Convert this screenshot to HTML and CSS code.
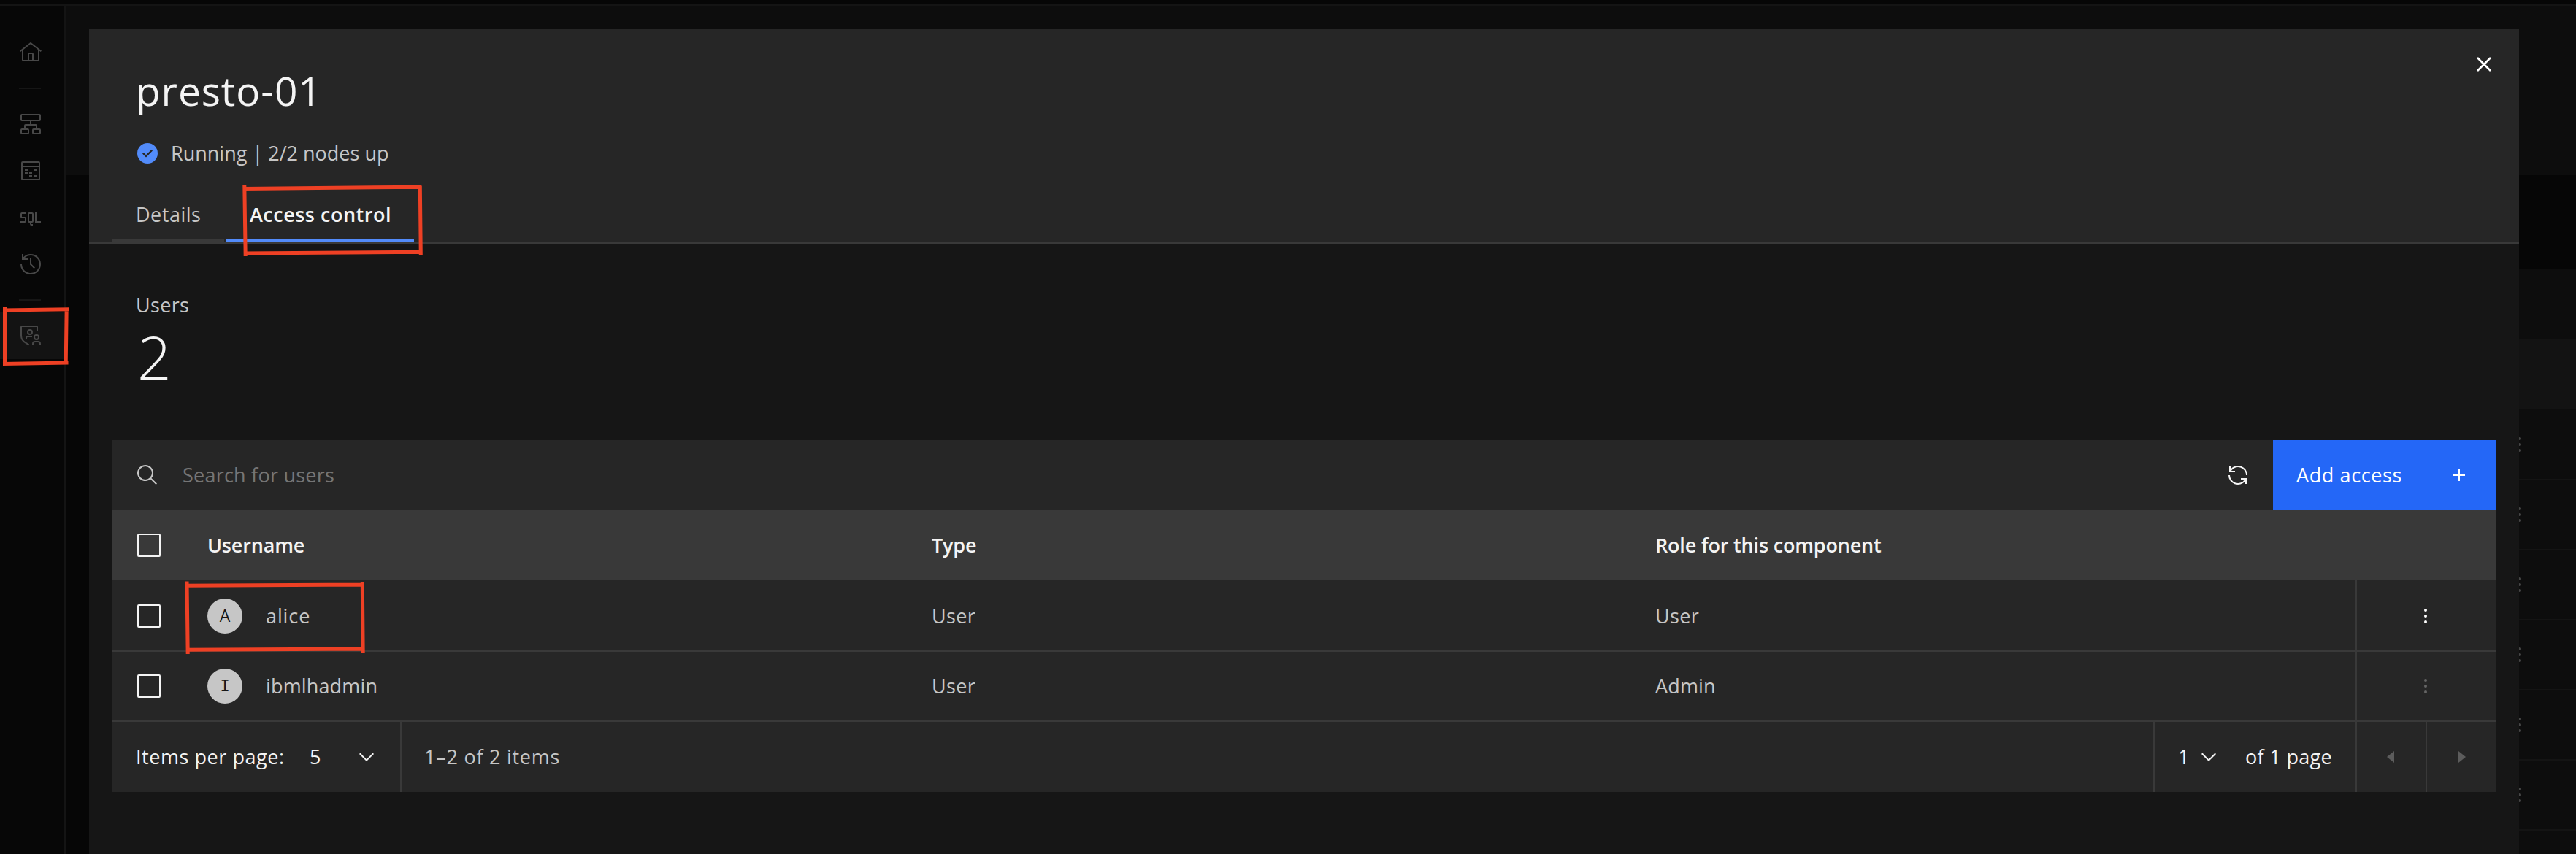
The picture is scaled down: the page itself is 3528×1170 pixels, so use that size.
FILE: index.html
```html
<!DOCTYPE html>
<html lang="en">
<head>
<meta charset="utf-8">
<title>presto-01</title>
<link rel="stylesheet" href="styles.css">
</head>
<body>
<div class="app">
  <header class="topbar"></header>
  <nav class="sidebar">
    <a class="nav-item"><svg class="icon" viewBox="0 0 32 32"><path d="M16.6123 2.2138a1.01 1.01 0 0 0-1.2427 0L1 13.4194l1.2427 1.5717L4 13.621V26a2.0041 2.0041 0 0 0 2 2H26a2.0037 2.0037 0 0 0 2-2V13.63L29.7573 15 31 13.4282ZM18 26H14V18h4Zm2 0V18a2.0023 2.0023 0 0 0-2-2H14a2.002 2.002 0 0 0-2 2v8H6V12.0615l10-7.79 10 7.8005V26Z"/></svg></a>
    <hr class="nav-rule">
    <a class="nav-item"><svg class="icon line" viewBox="0 0 32 32"><rect x="3" y="3" width="26" height="8" rx="1"/><path d="M16 11v6M8 23v-5a1 1 0 0 1 1-1h14a1 1 0 0 1 1 1v5"/><rect x="3" y="23" width="10" height="6" rx="1"/><rect x="19" y="23" width="10" height="6" rx="1"/></svg></a>
    <a class="nav-item"><svg class="icon" viewBox="0 0 32 32"><path d="M8 18h4v2H8zM14 18h4v2h-4zM8 14h4v2H8zM14 22h4v2h-4zM20 14h4v2h-4zM20 22h4v2h-4z"/><path d="M27 3H5a2 2 0 0 0-2 2v22a2 2 0 0 0 2 2h22a2 2 0 0 0 2-2V5a2 2 0 0 0-2-2Zm0 2v4H5V5ZM5 27V11h22v16Z"/></svg></a>
    <a class="nav-item"><svg class="icon" viewBox="0 0 32 32"><path d="M24 21V9h-2v14h8v-2zM18 9h-4a2 2 0 0 0-2 2v10a2 2 0 0 0 2 2h1v2a2 2 0 0 0 2 2h2v-2h-2v-2h1a2 2 0 0 0 2-2V11a2 2 0 0 0-2-2Zm-4 12V11h4v10ZM8 23H2v-2h6v-4H4a2 2 0 0 1-2-2v-4a2 2 0 0 1 2-2h6v2H4v4h4a2 2 0 0 1 2 2v4a2 2 0 0 1-2 2Z"/></svg></a>
    <a class="nav-item"><svg class="icon" viewBox="0 0 32 32"><path d="M20.59 22 15 16.41V7h2v8.58l5 5.01L20.59 22z"/><path d="M16 2A13.94 13.94 0 0 0 6 6.23V2H4v8h8V8H7.08A12 12 0 1 1 4 16H2A14 14 0 1 0 16 2Z"/></svg></a>
    <hr class="nav-rule">
    <a class="nav-item active"><svg class="icon line" viewBox="0 0 32 32"><path d="M25 10V4a1 1 0 0 0-1-1H4a1 1 0 0 0-1 1v12c0 5 2.600 7.900 7 10.200l3.600 2.200"/><circle cx="15" cy="11" r="3"/><path d="M10 21v-2a2 2 0 0 1 2-2h6"/><circle cx="24" cy="18" r="3"/><path d="M19 29v-2a3 3 0 0 1 3-3h4a3 3 0 0 1 3 3v2"/></svg></a>
  </nav>
  <main class="page">
    <div class="page-header"></div>
    <div class="page-gap"></div>
    <div class="page-table">
      <div class="page-toolbar"></div>
      <div class="page-columns"></div>
      <div class="page-row first"><svg class="icon" viewBox="0 0 32 32"><circle cx="16" cy="8" r="2"/><circle cx="16" cy="16" r="2"/><circle cx="16" cy="24" r="2"/></svg></div>
      <div class="page-row"><svg class="icon" viewBox="0 0 32 32"><circle cx="16" cy="8" r="2"/><circle cx="16" cy="16" r="2"/><circle cx="16" cy="24" r="2"/></svg></div>
      <div class="page-row"><svg class="icon" viewBox="0 0 32 32"><circle cx="16" cy="8" r="2"/><circle cx="16" cy="16" r="2"/><circle cx="16" cy="24" r="2"/></svg></div>
      <div class="page-row"><svg class="icon" viewBox="0 0 32 32"><circle cx="16" cy="8" r="2"/><circle cx="16" cy="16" r="2"/><circle cx="16" cy="24" r="2"/></svg></div>
      <div class="page-row"><svg class="icon" viewBox="0 0 32 32"><circle cx="16" cy="8" r="2"/><circle cx="16" cy="16" r="2"/><circle cx="16" cy="24" r="2"/></svg></div>
      <div class="page-row"><svg class="icon" viewBox="0 0 32 32"><circle cx="16" cy="8" r="2"/><circle cx="16" cy="16" r="2"/><circle cx="16" cy="24" r="2"/></svg></div>
      <div class="page-row"></div>
    </div>
  </main>
</div>

<section class="modal">
  <header class="modal-header">
    <h1 class="title">presto-01</h1>
    <div class="status">
      <svg class="icon status-icon" viewBox="0 0 32 32"><circle class="disc" cx="16" cy="16" r="14"/><path class="tick" d="M14 21.500 9 16.540 10.590 14.970 14 18.350 21.410 10.950 23 12.580Z"/></svg>
      <span>Running | 2/2 nodes up</span>
    </div>
    <div class="tabs">
      <a class="tab">Details</a>
      <a class="tab selected">Access control</a>
    </div>
    <button class="close"><svg viewBox="0 0 40 40"><path d="M11 11 29 29M29 11 11 29"/></svg></button>
  </header>
  <div class="modal-body">
    <div class="stat-label">Users</div>
    <div class="stat-value">2</div>
    <div class="table">
      <div class="toolbar">
        <svg class="icon search-icon" viewBox="0 0 32 32"><path d="m29 27.5859-7.5521-7.5521a11.0177 11.0177 0 1 0-1.4141 1.4141L27.5859 29ZM4 13a9 9 0 1 1 9 9A9.01 9.01 0 0 1 4 13Z"/></svg>
        <span class="search-text">Search for users</span>
        <button class="refresh"><svg class="icon" viewBox="0 0 32 32"><path d="M12 10H6.780A11 11 0 0 1 27 16h2A13 13 0 0 0 6 7.680V4H4v8h8Z"/><path d="M20 22h5.220A11 11 0 0 1 5 16H3a13 13 0 0 0 23 8.320V28h2V20H20Z"/></svg></button>
        <button class="add"><span>Add access</span><svg class="icon" viewBox="0 0 32 32"><path d="M17 15V8h-2v7H8v2h7v7h2v-7h7v-2z"/></svg></button>
      </div>
      <div class="row head">
        <span class="checkbox"></span>
        <span class="name-head">Username</span>
        <span class="type-head">Type</span>
        <span class="role-head">Role for this component</span>
      </div>
      <div class="row first">
        <span class="checkbox"></span>
        <span class="user"><span class="avatar">A</span><span class="alice">alice</span></span>
        <span>User</span>
        <span>User</span>
        <span class="actions"><svg class="icon" viewBox="0 0 32 32"><circle cx="16" cy="8" r="2"/><circle cx="16" cy="16" r="2"/><circle cx="16" cy="24" r="2"/></svg></span>
      </div>
      <div class="row">
        <span class="checkbox"></span>
        <span class="user"><span class="avatar serif">I</span><span class="ibmlhadmin">ibmlhadmin</span></span>
        <span>User</span>
        <span class="admin">Admin</span>
        <span class="actions disabled"><svg class="icon" viewBox="0 0 32 32"><circle cx="16" cy="8" r="2"/><circle cx="16" cy="16" r="2"/><circle cx="16" cy="24" r="2"/></svg></span>
      </div>
      <div class="pagination">
        <div class="per-page">
          <span class="per-page-label">Items per page:</span>
          <span class="per-page-value">5</span>
          <svg class="icon" viewBox="0 0 32 32"><path d="M16 22 6 12l1.400-1.400 8.600 8.600 8.600-8.600L26 12z"/></svg>
        </div>
        <div class="range">1–2 of 2 items</div>
        <div class="page-pick">
          <span class="page-value">1</span>
          <svg class="icon" viewBox="0 0 32 32"><path d="M16 22 6 12l1.400-1.400 8.600 8.600 8.600-8.600L26 12z"/></svg>
          <span class="page-total">of 1 page</span>
        </div>
        <button class="step prev"><svg class="icon" viewBox="0 0 32 32"><path d="M20 24 10 16 20 8z"/></svg></button>
        <button class="step next"><svg class="icon" viewBox="0 0 32 32"><path d="M12 8 22 16 12 24z"/></svg></button>
      </div>
    </div>
  </div>
</section>

<svg class="marks" viewBox="0 0 3528 1170">
  <path d="M334.800 253 336.200 351M334 258.500 577.500 256.200M575.300 255 576.300 350M334 347 578 345.200"/>
  <path d="M6.500 421V501M4 425 95 423.700M91.200 422 90.200 499M4 498.500 93.500 497"/>
  <path d="M256 796.500 257.200 896M254 802.300 498.500 801M496.300 798 497.200 894.500M255 890.200 499 889"/>
</svg>
</body>
</html>
```
FILE: styles.css
```css
* {
  box-sizing: border-box;
}

body {
  margin: 0;
  width: 3528px;
  height: 1170px;
  overflow: hidden;
  position: relative;
  background: #060606;
  color: #c6c6c6;
  font: 400 27px/36px "Open Sans", sans-serif;
}

button {
  border: 0;
  padding: 0;
  background: none;
  color: inherit;
  font: inherit;
}

.icon {
  display: block;
  flex: none;
  width: 32px;
  height: 32px;
  fill: currentColor;
}

.icon.line {
  fill: none;
  stroke: currentColor;
  stroke-width: 2;
}

/* Dimmed page behind the dialog */
.app {
  display: grid;
  grid-template: 8px 1162px / 90px 1fr;
  color: #484848;
}

.topbar {
  grid-column: 1 / 3;
  background: #060606;
  border-bottom: 2px solid #141414;
}

.sidebar {
  display: flex;
  flex-direction: column;
  padding-top: 32px;
  background: #070707;
  border-right: 2px solid #141414;
}

.nav-item {
  display: flex;
  align-items: center;
  height: 64px;
  padding-left: 26px;
}

.nav-item.active {
  background: #131313;
}

.nav-rule {
  width: 30px;
  height: 2px;
  margin: 16px 0 16px 26px;
  border: 0;
  background: #161616;
}

.page {
  overflow: hidden;
}

.page-header {
  height: 232px;
  background: #0d0d0d;
}

.page-gap {
  height: 128px;
}

.page-table {
  margin-left: 32px;
  background: #0d0d0d;
}

.page-toolbar {
  height: 96px;
}

.page-columns {
  height: 96px;
  background: #131313;
}

.page-row {
  display: flex;
  align-items: center;
  justify-content: flex-end;
  height: 96px;
  padding-right: 62px;
  border-bottom: 2px solid #141414;
}

.page-row.first {
  height: 98px;
  padding-top: 2px;
}

/* Dialog */
.modal {
  position: absolute;
  left: 122px;
  top: 40px;
  width: 3328px;
  height: 1130px;
  background: #161616;
}

.modal-header {
  position: relative;
  height: 294px;
  padding: 44px 32px 0;
  background: #262626;
  border-bottom: 2px solid #393939;
}

.title {
  margin: 0 0 28px 32px;
  color: #f4f4f4;
  font-size: 55px;
  font-weight: 400;
  line-height: 80px;
  letter-spacing: 0.9px;
}

.status {
  display: flex;
  align-items: center;
  gap: 16px;
  height: 36px;
  margin-left: 32px;
}

.disc {
  fill: #528bfa;
}

.tick {
  fill: #262626;
}

.tabs {
  display: flex;
  gap: 2px;
  margin-top: 31px;
}

.tab {
  width: 153px;
  height: 73px;
  padding-left: 32px;
  border-bottom: 4px solid #393939;
  line-height: 69px;
  letter-spacing: 0.5px;
}

.tab.selected {
  width: 258px;
  padding-left: 33px;
  border-color: #528bfa;
  color: #f4f4f4;
  font-weight: 600;
  white-space: nowrap;
}

.close {
  position: absolute;
  right: 28px;
  top: 28px;
  width: 40px;
  height: 40px;
}

.close svg {
  display: block;
  fill: none;
  stroke: #ffffff;
  stroke-width: 2.6;
}

.modal-body {
  padding: 66px 32px 0;
}

.stat-label {
  padding-left: 32px;
  letter-spacing: 0.31px;
}

.stat-value {
  margin: 4px 0 67px;
  padding-left: 34px;
  color: #f4f4f4;
  font-size: 82px;
  font-weight: 300;
  line-height: 96px;
}

.table {
  background: #262626;
}

.toolbar {
  display: flex;
  align-items: center;
  height: 96px;
  padding-left: 32px;
}

.search-text {
  flex: 1;
  padding-left: 32px;
  color: #757575;
  letter-spacing: 0.23px;
}

.search-icon {
  color: #c6c6c6;
}

.refresh {
  display: grid;
  place-items: center;
  width: 96px;
  height: 96px;
  color: #f4f4f4;
}

.add {
  display: flex;
  align-items: center;
  justify-content: space-between;
  width: 305px;
  height: 96px;
  padding: 0 34px 0 32px;
  background: #2467f7;
  color: #ffffff;
  letter-spacing: 0.62px;
}

.row {
  display: grid;
  grid-template-columns: 96px 992px 991px 959px 192px;
  align-items: center;
  height: 96px;
  padding-left: 34px;
  border-bottom: 2px solid #393939;
  letter-spacing: 0.35px;
}

.row.first {
  height: 98px;
}

.row.first > :not(.actions) {
  margin-top: 2px;
}

.row.first .icon {
  margin-top: 2px;
}

.row.head {
  background: #393939;
  border-bottom: 0;
  color: #f4f4f4;
  font-weight: 600;
  letter-spacing: -0.18px;
}

.checkbox {
  width: 32px;
  height: 32px;
  border: 2px solid #f4f4f4;
  border-radius: 2px;
}

.user {
  display: flex;
  align-items: center;
  gap: 32px;
}

.avatar {
  width: 48px;
  height: 48px;
  border-radius: 50%;
  background: #c6c6c6;
  color: #161616;
  font-size: 23px;
  line-height: 47px;
  letter-spacing: 0;
  text-align: center;
}

.avatar.serif {
  font-family: "DejaVu Sans Mono", monospace;
  font-size: 22px;
}

.alice {
  letter-spacing: 0.9px;
}

.ibmlhadmin {
  letter-spacing: 0.15px;
}

.admin {
  letter-spacing: 0.15px;
}

.actions {
  display: grid;
  place-items: center;
  align-self: stretch;
  padding-right: 2px;
  border-left: 2px solid #393939;
  color: #ffffff;
}

.actions.disabled {
  color: #656565;
}

.pagination {
  display: flex;
  height: 96px;
  color: #f4f4f4;
}

.per-page {
  display: flex;
  align-items: center;
  width: 396px;
  padding-left: 32px;
  border-right: 2px solid #393939;
}

.per-page-label {
  width: 238px;
  letter-spacing: 0.55px;
}

.per-page-value {
  width: 62px;
}

.range {
  flex: 1;
  padding-left: 31px;
  color: #c6c6c6;
  line-height: 95px;
  letter-spacing: 0.75px;
}

.page-pick {
  display: flex;
  align-items: center;
  width: 277px;
  padding-left: 32px;
  border-left: 2px solid #393939;
}

.page-value {
  width: 26px;
}

.page-total {
  padding-left: 34px;
  letter-spacing: 0.33px;
}

.step {
  display: grid;
  place-items: center;
  width: 96px;
  border-left: 2px solid #393939;
  color: #5c5c5c;
}

/* Hand-drawn highlight boxes */
.marks {
  position: absolute;
  left: 0;
  top: 0;
  width: 3528px;
  height: 1170px;
  fill: none;
  stroke: #ee4024;
  stroke-width: 5;
}
```
